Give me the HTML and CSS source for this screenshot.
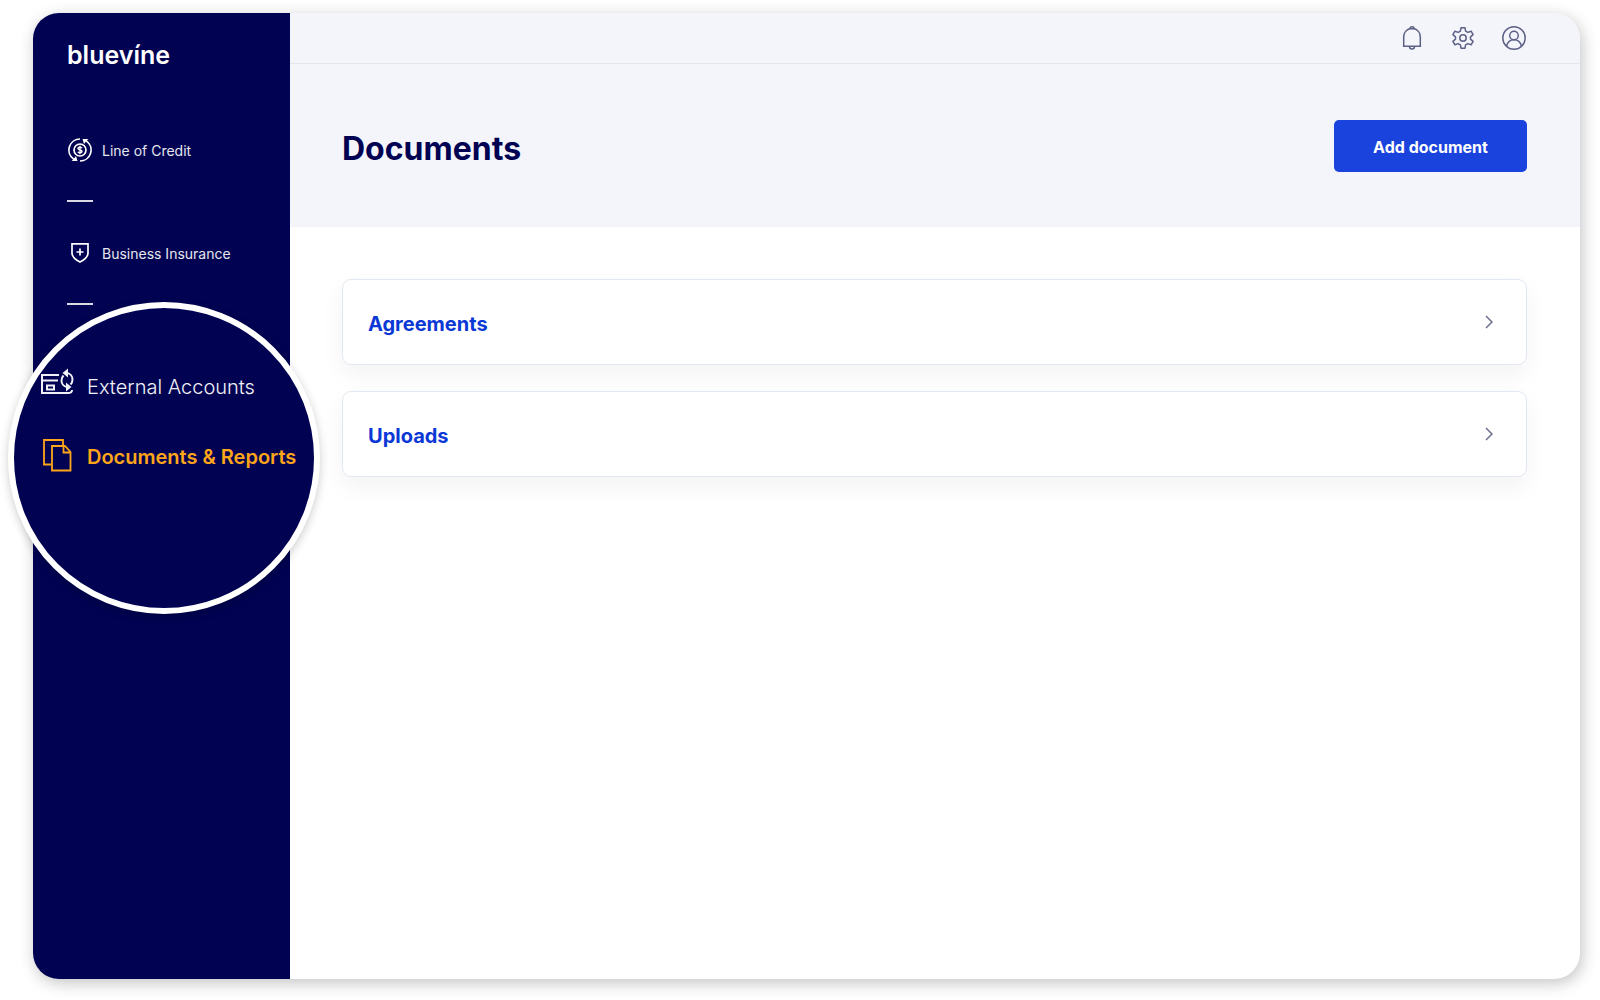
FILE: index.html
```html
<!DOCTYPE html>
<html lang="en">
<head>
  <meta charset="UTF-8" />
  <meta name="viewport" content="width=device-width, initial-scale=1.0" />
  <title>Documents | Bluevine</title>
  <link rel="stylesheet" href="styles.css">
</head>
<body>
  <div class="window">
    <aside class="sidebar">
      <a class="logo" href="#">bluevíne</a>
      <nav class="nav">
        <a class="nav-item" href="#">
          <svg class="nav-icon" viewBox="0 0 24 24" fill="none" stroke="currentColor">
            <path stroke-width="1.700" d="M12 1A11 11 0 0 0 5.500 20.900M12 23A11 11 0 0 0 18.500 3.100" />
            <circle cx="12" cy="12" r="6" stroke-width="1.700" />
            <path stroke-width="1.400" d="M14 10.200c-.3-.7-1-1.100-2-1.100-1.200 0-2 .5-2 1.400 0 2 4 1 4 3 0 .9-.8 1.400-2 1.400-1 0-1.800-.4-2.100-1.200M12 7.800v8.400" />
            <path fill="currentColor" stroke="none" d="M14.500 1h6l-1.500 1.200.5 1.800-1.500-.4-2 2.400zM9.500 23h-6l1.500-1.200-.5-1.800 1.500.4 2-2.400z" />
          </svg>
          <span>Line of Credit</span>
        </a>
        <hr class="divider">
        <a class="nav-item" href="#">
          <svg class="nav-icon" viewBox="0 0 24 24" fill="none" stroke="currentColor" stroke-width="1.700">
            <path d="M4 2.800h16v9.200c0 4-4 7-8 9-4-2-8-5-8-9zM12 7.500v7M8.500 11h7" />
          </svg>
          <span>Business Insurance</span>
        </a>
        <hr class="divider">
      </nav>
      <div class="lens">
        <nav class="lens-nav">
          <a class="lens-item" href="#">
            <svg class="lens-icon" viewBox="0 0 34 34" fill="none" stroke="currentColor" stroke-width="2">
              <path d="M19 7H2v18h26c2.500 0 4-1 4-3M2 12.500h16M7 17.500h7v4H7z" />
              <path d="M27 5c3.500.5 5.500 3.500 5.500 6.500 0 2-1 4-2 5M27 19c-3.500-.5-5.500-3.500-5.500-6.500 0-2 1-4 2-5" />
              <path fill="currentColor" stroke="none" d="M22.500 5l5.500-4.500v9zM31.500 19L26 23.500v-9z" />
            </svg>
            <span>External Accounts</span>
          </a>
          <a class="lens-item active" href="#">
            <svg class="lens-icon" viewBox="0 0 34 34" fill="none" stroke="currentColor" stroke-width="1.800">
              <path d="M11 26.500H4V2h19v6" />
              <path d="M12 8h13l5.500 6v18.500H12zM23.500 8v6.500h7" />
            </svg>
            <span>Documents &amp; Reports</span>
          </a>
        </nav>
      </div>
    </aside>
    <main class="main">
      <header class="topbar">
        <button class="icon-btn" aria-label="Notifications">
          <svg viewBox="0 0 24 24" fill="none" stroke="currentColor" stroke-width="1.500">
            <path d="M3.700 20.300V11c0-4.300 3-7.500 6.300-8.500 0-1 .8-1.700 2-1.700s2 .7 2 1.700c3.300 1 6.300 4.200 6.300 8.500v9.300z" />
            <path d="M9.500 2.700h5M9.500 20.500c0 3.400 5 3.400 5 0" />
          </svg>
        </button>
        <button class="icon-btn" aria-label="Settings">
          <svg viewBox="0 0 24 24" fill="none" stroke="currentColor" stroke-width="1.500" stroke-linejoin="round">
            <path d="M10 1.800h4l.6 3.300 2.300 1.300 3.200-1.200 2 3.500-2.600 2.100v2.400l2.600 2.100-2 3.500-3.200-1.200-2.300 1.300-.6 3.300h-4l-.6-3.300-2.300-1.300-3.200 1.200-2-3.500 2.600-2.100v-2.400L1.900 8.700l2-3.500 3.200 1.200 2.300-1.300z" />
            <circle cx="12" cy="12" r="3.200" />
          </svg>
        </button>
        <button class="icon-btn" aria-label="Profile">
          <svg viewBox="0 0 24 24" fill="none" stroke="currentColor" stroke-width="1.500">
            <circle cx="12" cy="12" r="11.200" />
            <circle cx="12" cy="9.500" r="4.300" />
            <path d="M4.500 20.200c1-4 4-6.400 7.500-6.400s6.500 2.400 7.500 6.400" />
          </svg>
        </button>
      </header>
      <section class="hero">
        <h1>Documents</h1>
        <button class="add-btn">Add document</button>
      </section>
      <section class="cards">
        <a class="card" href="#">
          <h2>Agreements</h2>
          <svg class="chevron" viewBox="0 0 8 14" fill="none" stroke="currentColor" stroke-width="1.500">
            <path d="M1 1l6 6-6 6" />
          </svg>
        </a>
        <a class="card" href="#">
          <h2>Uploads</h2>
          <svg class="chevron" viewBox="0 0 8 14" fill="none" stroke="currentColor" stroke-width="1.500">
            <path d="M1 1l6 6-6 6" />
          </svg>
        </a>
      </section>
    </main>
  </div>
</body>
</html>
```
FILE: styles.css
```css
* {
  box-sizing: border-box;
}
body {
  margin: 0;
  min-height: 100vh;
  padding: 13px 20px 21px 33px;
  display: flex;
  font-family: Inter, "Liberation Sans", sans-serif;
  background: #fff;
  color: #010352;
}
a {
  color: inherit;
  text-decoration: none;
}
.window {
  flex: 1;
  display: flex;
  border-radius: 26px;
  background: #fff;
  box-shadow: 2px 4px 16px rgba(0, 0, 0, 0.24);
}
.sidebar {
  position: relative;
  width: 257px;
  flex-shrink: 0;
  padding: 26px 0 0 34px;
  border-radius: 26px 0 0 26px;
  background: #010352;
  color: #fff;
}
.logo {
  display: block;
  font-size: 25px;
  line-height: 32px;
  font-weight: 600;
}
.nav {
  display: flex;
  flex-direction: column;
  gap: 38px;
  margin-top: 66px;
}
.nav-item {
  display: flex;
  align-items: center;
  gap: 10px;
  height: 25px;
  font-size: 14px;
  color: #e6e6ee;
}
.nav-item span {
  padding-top: 2px;
}
.nav-icon {
  width: 24px;
  height: 24px;
  margin-left: 1px;
  color: #fff;
}
.divider {
  width: 26px;
  height: 2px;
  margin: 0;
  border: none;
  background: #d9d9e2;
}

/* magnified part of the menu */
.lens {
  position: absolute;
  top: 289px;
  left: -25px;
  width: 312px;
  height: 312px;
  border: 6px solid #fff;
  border-radius: 50%;
  background: #010352;
  box-shadow: 0 3px 10px rgba(0, 0, 0, 0.2);
}
.lens-nav {
  display: flex;
  flex-direction: column;
  gap: 36px;
  padding: 60px 0 0 26px;
}
.lens-item {
  display: flex;
  align-items: center;
  gap: 13px;
  font-size: 20px;
  font-weight: 300;
  white-space: nowrap;
  color: #f0f0f6;
}
.lens-item span {
  padding-top: 4px;
}
.lens-icon {
  width: 34px;
  height: 34px;
  flex-shrink: 0;
}
.lens-item.active {
  color: #ffa519;
  font-weight: 600;
}

.main {
  flex: 1;
  min-width: 0;
}
.topbar {
  display: flex;
  justify-content: flex-end;
  align-items: center;
  gap: 27px;
  height: 51px;
  padding-right: 54px;
  border-bottom: 1px solid #e3e6ef;
  border-radius: 0 26px 0 0;
  background: #f4f5fa;
}
.icon-btn {
  width: 24px;
  height: 24px;
  padding: 0;
  border: none;
  background: none;
  color: #5d6187;
  cursor: pointer;
}
.icon-btn svg {
  display: block;
}
.hero {
  display: flex;
  justify-content: space-between;
  align-items: center;
  height: 163px;
  padding: 0 53px 0 52px;
  background: #f4f5fa;
}
h1 {
  margin: 6px 0 0;
  font-size: 32px;
  font-weight: 700;
}
.add-btn {
  width: 193px;
  height: 52px;
  padding: 3px 0 0;
  border: none;
  border-radius: 5px;
  background: #1a42dd;
  color: #fff;
  font-family: inherit;
  font-size: 16px;
  font-weight: 700;
  cursor: pointer;
}
.cards {
  display: flex;
  flex-direction: column;
  gap: 26px;
  padding: 52px 53px 52px 52px;
}
.card {
  display: flex;
  justify-content: space-between;
  align-items: center;
  height: 86px;
  padding: 0 33px 0 25px;
  border: 1px solid #e2e8f1;
  border-radius: 9px;
  background: #fff;
  box-shadow: 0 10px 24px rgba(0, 0, 0, 0.05);
}
.card h2 {
  margin: 4px 0 0;
  font-size: 20px;
  font-weight: 700;
  color: #0a38d6;
}
.chevron {
  width: 8px;
  height: 14px;
  color: #6b6e8d;
}
```
